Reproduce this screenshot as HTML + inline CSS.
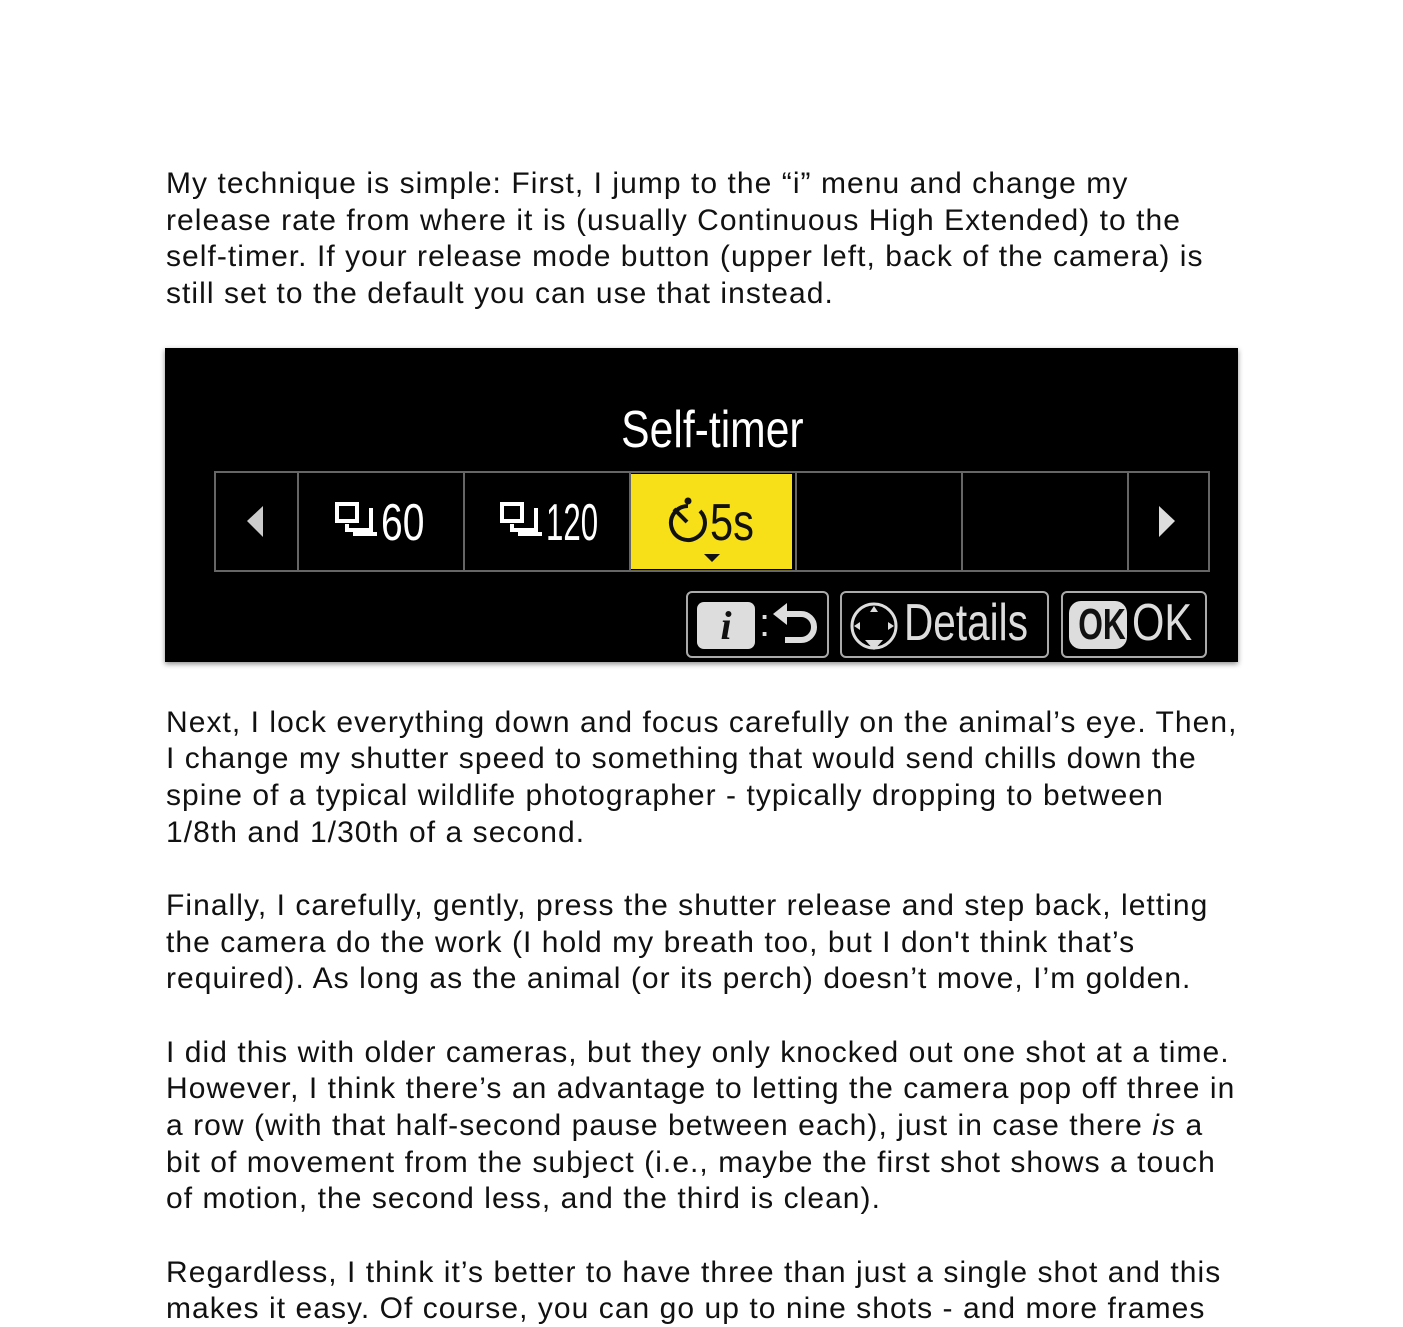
<!DOCTYPE html>
<html><head><meta charset="utf-8"><style>
body{margin:0;width:1403px;height:1322px;overflow:hidden;background:#fff;position:relative;font-family:"Liberation Sans",Helvetica,Arial,sans-serif;}
.l{position:absolute;left:166px;font-size:30px;letter-spacing:1.05px;line-height:36px;height:36px;white-space:nowrap;color:#111;margin-top:1px}
.cam{position:absolute;left:165px;top:348px;width:1073px;height:314px;background:#000;box-shadow:0 2px 5px rgba(0,0,0,.45);overflow:hidden}
.c{position:absolute;color:#fff;font-family:"Liberation Sans Narrow","Liberation Sans",sans-serif;white-space:nowrap}
.cell{position:absolute;top:123px;height:101px;border:2px solid #666;box-sizing:border-box}
.btn{position:absolute;top:243px;height:67px;border:2px solid #aaa;border-radius:6px;box-sizing:border-box}
</style></head><body>
<div class="l" style="top:165px">My technique is simple: First, I jump to the “i” menu and change my</div>
<div class="l" style="top:202px">release rate from where it is (usually Continuous High Extended) to the</div>
<div class="l" style="top:238px">self-timer. If your release mode button (upper left, back of the camera) is</div>
<div class="l" style="top:275px">still set to the default you can use that instead.</div>

<div class="cam">
  <div class="c" style="left:0;width:1095px;text-align:center;top:52px;font-size:52px;line-height:60px;transform:scaleX(.82);transform-origin:547px 0">Self-timer</div>
  <div class="cell" style="left:49px;width:85px"></div>
  <div class="cell" style="left:132px;width:168px"></div>
  <div class="cell" style="left:298px;width:168px"></div>
  <div class="cell" style="left:464px;width:168px"></div>
  <div class="cell" style="left:630px;width:168px"></div>
  <div class="cell" style="left:796px;width:168px"></div>
  <div class="cell" style="left:962px;width:83px"></div>
  <div style="position:absolute;left:466px;top:126px;width:161px;height:95px;background:#f7e017"></div>
  <svg style="position:absolute;left:0;top:0" width="1073" height="314">
    <polygon points="98,158 82,173 98,189" fill="#ccc"/>
    <polygon points="994,158 1010,173 994,189" fill="#ddd"/>
    <g fill="none" stroke="#fff" stroke-width="4">
      <rect x="172" y="156" width="20" height="17"/><path d="M182,176 v6 h24 M190,180 v6 h22 M206,160 v26"/>
      <rect x="337" y="156" width="20" height="17"/><path d="M347,176 v6 h24 M355,180 v6 h22 M371,160 v26"/>
    </g>
    <g fill="none" stroke="#111" stroke-width="4">
      <path d="M535,163 A17,17 0 1 1 523,158"/><path d="M509,161 L522,174"/>
    </g>
    <circle cx="523" cy="153" r="3.5" fill="#111"/>
    <polygon points="539,206 555,206 547,214" fill="#111"/>
  </svg>
  <div class="c" style="left:216px;top:145px;font-size:52px;line-height:60px;transform:scaleX(.75);transform-origin:0 0">60</div>
  <div class="c" style="left:381px;top:145px;font-size:52px;line-height:60px;transform:scaleX(.6);transform-origin:0 0">120</div>
  <div class="c" style="left:545px;top:146px;font-size:52px;line-height:58px;color:#111;transform:scaleX(.8);transform-origin:0 0">5s</div>
  <div class="btn" style="left:521px;width:143px"></div>
  <div style="position:absolute;left:532px;top:254px;width:58px;height:47px;background:#ddd;border-radius:7px;color:#111;font:italic bold 40px 'Liberation Serif',serif;text-align:center;line-height:47px">i</div>
  <div class="c" style="left:594px;top:250px;font-size:40px;line-height:50px;color:#ddd">:</div>
  <svg style="position:absolute;left:606px;top:252px" width="52" height="52"><path d="M8,14 H30 A13,13 0 0 1 30,40 H14" fill="none" stroke="#ddd" stroke-width="6"/><polygon points="2,14 16,3 16,25" fill="#ddd"/></svg>
  <div class="btn" style="left:675px;width:209px"></div>
  <svg style="position:absolute;left:683px;top:252px" width="52" height="52"><circle cx="26" cy="26" r="22" fill="none" stroke="#ddd" stroke-width="3"/><polygon points="26,6 22,12 30,12" fill="#ddd"/><polygon points="17,40 35,40 26,50" fill="#ddd"/><polygon points="6,26 12,22 12,30" fill="#ddd"/><polygon points="46,26 40,22 40,30" fill="#ddd"/></svg>
  <div class="c" style="left:739px;top:246px;font-size:52px;line-height:58px;color:#ddd;transform:scaleX(.78);transform-origin:0 0">Details</div>
  <div class="btn" style="left:896px;width:146px"></div>
  <div style="position:absolute;left:904px;top:253px;width:58px;height:48px;background:#ddd;border-radius:12px;color:#111;font:bold 44px 'Liberation Sans Narrow','Liberation Sans',sans-serif;line-height:48px;text-align:center;overflow:hidden"><span style="display:inline-block;transform:scaleX(.72)">OK</span></div>
  <div class="c" style="left:967px;top:246px;font-size:52px;line-height:58px;color:#ddd;transform:scaleX(.8);transform-origin:0 0">OK</div>
</div>

<div class="l" style="top:704px">Next, I lock everything down and focus carefully on the animal’s eye. Then,</div>
<div class="l" style="top:740px">I change my shutter speed to something that would send chills down the</div>
<div class="l" style="top:777px">spine of a typical wildlife photographer - typically dropping to between</div>
<div class="l" style="top:814px">1/8th and 1/30th of a second.</div>

<div class="l" style="top:887px">Finally, I carefully, gently, press the shutter release and step back, letting</div>
<div class="l" style="top:924px">the camera do the work (I hold my breath too, but I don't think that’s</div>
<div class="l" style="top:960px">required). As long as the animal (or its perch) doesn’t move, I’m golden.</div>

<div class="l" style="top:1034px">I did this with older cameras, but they only knocked out one shot at a time.</div>
<div class="l" style="top:1070px">However, I think there’s an advantage to letting the camera pop off three in</div>
<div class="l" style="top:1107px">a row (with that half-second pause between each), just in case there <i>is</i> a</div>
<div class="l" style="top:1144px">bit of movement from the subject (i.e., maybe the first shot shows a touch</div>
<div class="l" style="top:1180px">of motion, the second less, and the third is clean).</div>

<div class="l" style="top:1254px">Regardless, I think it’s better to have three than just a single shot and this</div>
<div class="l" style="top:1290px">makes it easy. Of course, you can go up to nine shots - and more frames</div>
</body></html>
